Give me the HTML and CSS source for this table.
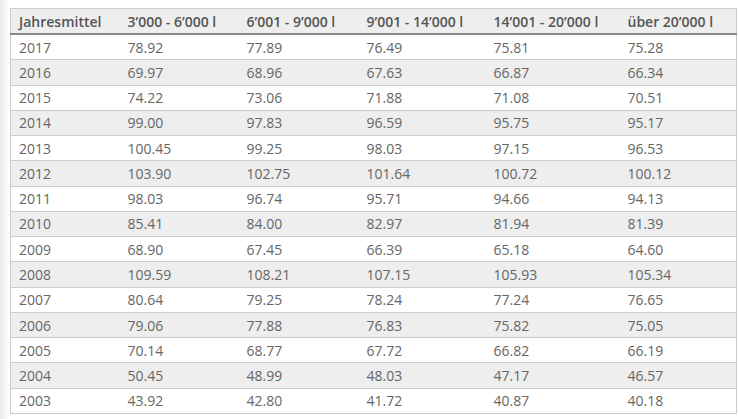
FILE: index.html
```html
<!DOCTYPE html>
<html>
<head>
<meta charset="utf-8">
<link rel="stylesheet" href="styles.css">
</head>
<body>
<div class="page">
<table class="prices">
<colgroup>
<col class="c1"><col class="c2"><col class="c3"><col class="c4"><col class="c5"><col class="c6">
</colgroup>
<thead>
<tr><th>Jahresmittel</th><th>3’000 - 6’000 l</th><th>6’001 - 9’000 l</th><th>9’001 - 14’000 l</th><th>14’001 - 20’000 l</th><th>über 20’000 l</th></tr>
</thead>
<tbody>
<tr><td>2017</td><td>78.92</td><td>77.89</td><td>76.49</td><td>75.81</td><td>75.28</td></tr>
<tr><td>2016</td><td>69.97</td><td>68.96</td><td>67.63</td><td>66.87</td><td>66.34</td></tr>
<tr><td>2015</td><td>74.22</td><td>73.06</td><td>71.88</td><td>71.08</td><td>70.51</td></tr>
<tr><td>2014</td><td>99.00</td><td>97.83</td><td>96.59</td><td>95.75</td><td>95.17</td></tr>
<tr><td>2013</td><td>100.45</td><td>99.25</td><td>98.03</td><td>97.15</td><td>96.53</td></tr>
<tr><td>2012</td><td>103.90</td><td>102.75</td><td>101.64</td><td>100.72</td><td>100.12</td></tr>
<tr><td>2011</td><td>98.03</td><td>96.74</td><td>95.71</td><td>94.66</td><td>94.13</td></tr>
<tr><td>2010</td><td>85.41</td><td>84.00</td><td>82.97</td><td>81.94</td><td>81.39</td></tr>
<tr><td>2009</td><td>68.90</td><td>67.45</td><td>66.39</td><td>65.18</td><td>64.60</td></tr>
<tr><td>2008</td><td>109.59</td><td>108.21</td><td>107.15</td><td>105.93</td><td>105.34</td></tr>
<tr><td>2007</td><td>80.64</td><td>79.25</td><td>78.24</td><td>77.24</td><td>76.65</td></tr>
<tr><td>2006</td><td>79.06</td><td>77.88</td><td>76.83</td><td>75.82</td><td>75.05</td></tr>
<tr><td>2005</td><td>70.14</td><td>68.77</td><td>67.72</td><td>66.82</td><td>66.19</td></tr>
<tr><td>2004</td><td>50.45</td><td>48.99</td><td>48.03</td><td>47.17</td><td>46.57</td></tr>
<tr><td>2003</td><td>43.92</td><td>42.80</td><td>41.72</td><td>40.87</td><td>40.18</td></tr>
</tbody>
</table>
</div>
</body>
</html>
```
FILE: styles.css
```css
html, body {
  margin: 0;
  padding: 0;
  background: #ffffff;
}
.page {
  width: 738px;
  height: 419px;
  padding: 8px 0 0 10px;
  box-sizing: border-box;
  background: linear-gradient(to right, #ececec 0px, #f8f8f8 6px, #ffffff 10px);
}
.prices {
  border-collapse: collapse;
  width: 726px;
  table-layout: fixed;
  font-family: "Open Sans", "Liberation Sans", sans-serif;
  font-size: 14px;
  color: #666666;
  border: 1px solid #cccccc;
  background: #ffffff;
}
.c1 { width: 109px; }
.c2 { width: 119px; }
.c3 { width: 120px; }
.c4 { width: 127px; }
.c5 { width: 134px; }
.c6 { width: 117px; }
.prices th {
  background: #eeeeee;
  color: #555555;
  font-weight: 600;
  text-align: left;
  padding: 0 8px;
  height: 24px;
  border-bottom: 2px solid #8a8a8a;
  white-space: nowrap;
}
.prices td {
  padding: 0 8px;
  height: 24.27px;
  border-bottom: 1px solid #cccccc;
  white-space: nowrap;
}
.prices tbody tr:nth-child(even) td {
  background: #eeeeee;
}
```
